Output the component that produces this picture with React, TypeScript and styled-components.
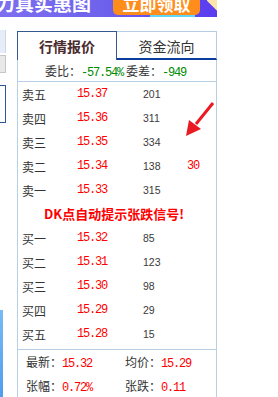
import React from "react";
import styled, { createGlobalStyle } from "styled-components";

const GlobalStyle = createGlobalStyle`
  html, body {
    margin: 0;
    padding: 0;
    background: #ffffff;
  }
  body {
    font-family: "Noto Sans CJK SC", "Liberation Sans", sans-serif;
    overflow: hidden;
  }
`;

const sells = [
  { name: "卖五", price: "15.37", vol: "201" },
  { name: "卖四", price: "15.36", vol: "311" },
  { name: "卖三", price: "15.35", vol: "334" },
  { name: "卖二", price: "15.34", vol: "138", extra: "30" },
  { name: "卖一", price: "15.33", vol: "315" },
];

const buys = [
  { name: "买一", price: "15.32", vol: "85" },
  { name: "买二", price: "15.31", vol: "123" },
  { name: "买三", price: "15.30", vol: "98" },
  { name: "买四", price: "15.29", vol: "29" },
  { name: "买五", price: "15.28", vol: "15" },
];

export default function App() {
  return (
    <Page>
      <GlobalStyle />
      <Banner>
        <BannerTitle>力真实惠图</BannerTitle>
        <ButtonWrap>
          <GetButton>立即领取</GetButton>
        </ButtonWrap>
        <Corner />
      </Banner>
      <Main>
        <LeftRail>
          <LightBox />
          <GrayBox />
          <OutlineBox />
          <BlueBar />
        </LeftRail>
        <Panel>
          <Tabs>
            <Tab $active>行情报价</Tab>
            <Tab>资金流向</Tab>
          </Tabs>
          <Content>
            <WeiRow>
              委比：<Green>-57.54%</Green>委差：<Green>-949</Green>
            </WeiRow>
            <Book>
              {sells.map((r) => (
                <Row key={r.name}>
                  <Label>{r.name}</Label>
                  <Price>{r.price}</Price>
                  <Vol>{r.vol}</Vol>
                  <Price>{r.extra}</Price>
                </Row>
              ))}
              <Notice>DK点自动提示张跌信号!</Notice>
              {buys.map((r) => (
                <Row key={r.name}>
                  <Label>{r.name}</Label>
                  <Price>{r.price}</Price>
                  <Vol>{r.vol}</Vol>
                </Row>
              ))}
            </Book>
            <Stats>
              <Stat>
                最新：<Price>15.32</Price>
              </Stat>
              <Stat>
                均价：<Price>15.29</Price>
              </Stat>
              <Stat>
                张幅：<Price>0.72%</Price>
              </Stat>
              <Stat>
                张跌：<Price>0.11</Price>
              </Stat>
            </Stats>
            <Arrow width="34" height="40" viewBox="0 0 34 40">
              <line x1="30" y1="3" x2="13" y2="24" stroke="#ea1a22" strokeWidth="3" />
              <polygon points="3,36 6,20 18,29" fill="#ea1a22" />
            </Arrow>
          </Content>
        </Panel>
      </Main>
    </Page>
  );
}

const Page = styled.div`
  width: 278px;
  height: 397px;
  overflow: hidden;
`;

const Banner = styled.div`
  width: 217px;
  height: 17px;
  display: flex;
  align-items: flex-start;
  overflow: hidden;
  background: linear-gradient(90deg, #7c6ff0 0%, #6f63ec 45%, #5a3cf0 100%);
`;

const BannerTitle = styled.div`
  margin-left: -4px;
  margin-top: -8px;
  width: 117px;
  font-size: 19px;
  line-height: 22px;
  font-weight: 700;
  color: #ffffff;
  white-space: nowrap;
`;

const ButtonWrap = styled.div`
  width: 87px;
  height: 17px;
  background: linear-gradient(
    90deg,
    transparent 0%,
    transparent 42%,
    #62d6f6 42%,
    #62d6f6 94%,
    transparent 94%
  );
`;

const GetButton = styled.div`
  height: 15px;
  border-radius: 0 0 5px 5px;
  background: #ff8d1c;
  color: #ffffff;
  font-size: 17px;
  font-weight: 700;
  line-height: 15px;
  overflow: hidden;
  padding-bottom: 4px;
  box-sizing: border-box;
  display: flex;
  align-items: flex-end;
  justify-content: center;
`;

const Corner = styled.div`
  margin-left: auto;
  width: 10px;
  height: 17px;
  background: linear-gradient(225deg, #fde4ab 0%, #fde4ab 40%, transparent 41%);
`;

const Main = styled.div`
  display: flex;
  margin-top: 13px;
`;

const LeftRail = styled.div`
  width: 17px;
  flex-shrink: 0;
  display: flex;
  flex-direction: column;
  align-items: flex-start;
`;

const LightBox = styled.div`
  width: 5px;
  height: 23px;
  background: #e6edf8;
  border-right: 1px solid #cdd7e6;
`;

const GrayBox = styled.div`
  margin-top: 2px;
  width: 5px;
  height: 16px;
  background: #e8e8e8;
  border: 1px solid #c6c6c6;
  border-left: none;
`;

const OutlineBox = styled.div`
  margin-top: 12px;
  width: 5px;
  height: 36px;
  background: #ffffff;
  border: 1px solid #2c5795;
  border-left: none;
`;

const BlueBar = styled.div`
  margin-top: 187px;
  width: 3px;
  height: 90px;
  background: linear-gradient(180deg, #78baf4 0%, #4f9cee 100%);
`;

const Panel = styled.div`
  width: 200px;
  margin-top: 1px;
  flex-shrink: 0;
`;

const Tabs = styled.div`
  display: flex;
  height: 29px;
`;

const Tab = styled.div<{ $active?: boolean }>`
  box-sizing: border-box;
  height: 29px;
  display: flex;
  align-items: center;
  justify-content: center;
  font-size: 14px;
  width: ${(p) => (p.$active ? "100px" : "auto")};
  flex: ${(p) => (p.$active ? "none" : "1")};
  font-weight: ${(p) => (p.$active ? 700 : 400)};
  color: ${(p) => (p.$active ? "#4a2c2e" : "#333333")};
  border-top: 1px solid ${(p) => (p.$active ? "#35598e" : "#b4cce4")};
  border-left: ${(p) => (p.$active ? "1px solid #35598e" : "none")};
  border-right: 1px solid ${(p) => (p.$active ? "#35598e" : "#b4cce4")};
  border-bottom: ${(p) => (p.$active ? "none" : "2px solid #0b3d9e")};
  padding-top: ${(p) => (p.$active ? "0" : "2px")};
`;

const Content = styled.div`
  position: relative;
  border-left: 1px solid #b8cfe6;
  border-right: 1px solid #b8cfe6;
`;

const WeiRow = styled.div`
  height: 22px;
  box-sizing: border-box;
  border-bottom: 1px solid #b8cfe6;
  padding-left: 27px;
  font-size: 12px;
  line-height: 22px;
  color: #333333;
  white-space: nowrap;
`;

const Green = styled.span`
  font-family: "Liberation Mono", monospace;
  font-size: 12px;
  letter-spacing: -1.2px;
  margin-right: 3px;
  color: #008a00;
`;

const Book = styled.div`
  padding-bottom: 3px;
  border-bottom: 1px solid #b8cfe6;
`;

const Row = styled.div`
  display: grid;
  grid-template-columns: 55px 66px 44px 1fr;
  height: 24px;
  align-items: center;
  padding-left: 4px;
`;

const Label = styled.span`
  font-size: 12px;
  color: #333333;
`;

const Price = styled.span`
  font-family: "Liberation Mono", monospace;
  font-size: 12px;
  letter-spacing: -1.2px;
  color: #ff0000;
`;

const Vol = styled.span`
  font-family: "Liberation Sans", sans-serif;
  font-size: 10.5px;
  color: #3a3a3a;
`;

const Notice = styled.div`
  height: 24px;
  line-height: 24px;
  text-align: center;
  padding-right: 6px;
  font-size: 13px;
  font-weight: 700;
  color: #ff0000;
`;

const Stats = styled.div`
  display: grid;
  grid-template-columns: 99px 1fr;
  grid-auto-rows: 24px;
  align-items: center;
  padding-left: 8px;
`;

const Stat = styled.div`
  font-size: 12px;
  color: #333333;
  white-space: nowrap;
`;

const Arrow = styled.svg`
  position: absolute;
  left: 165px;
  top: 40px;
`;
